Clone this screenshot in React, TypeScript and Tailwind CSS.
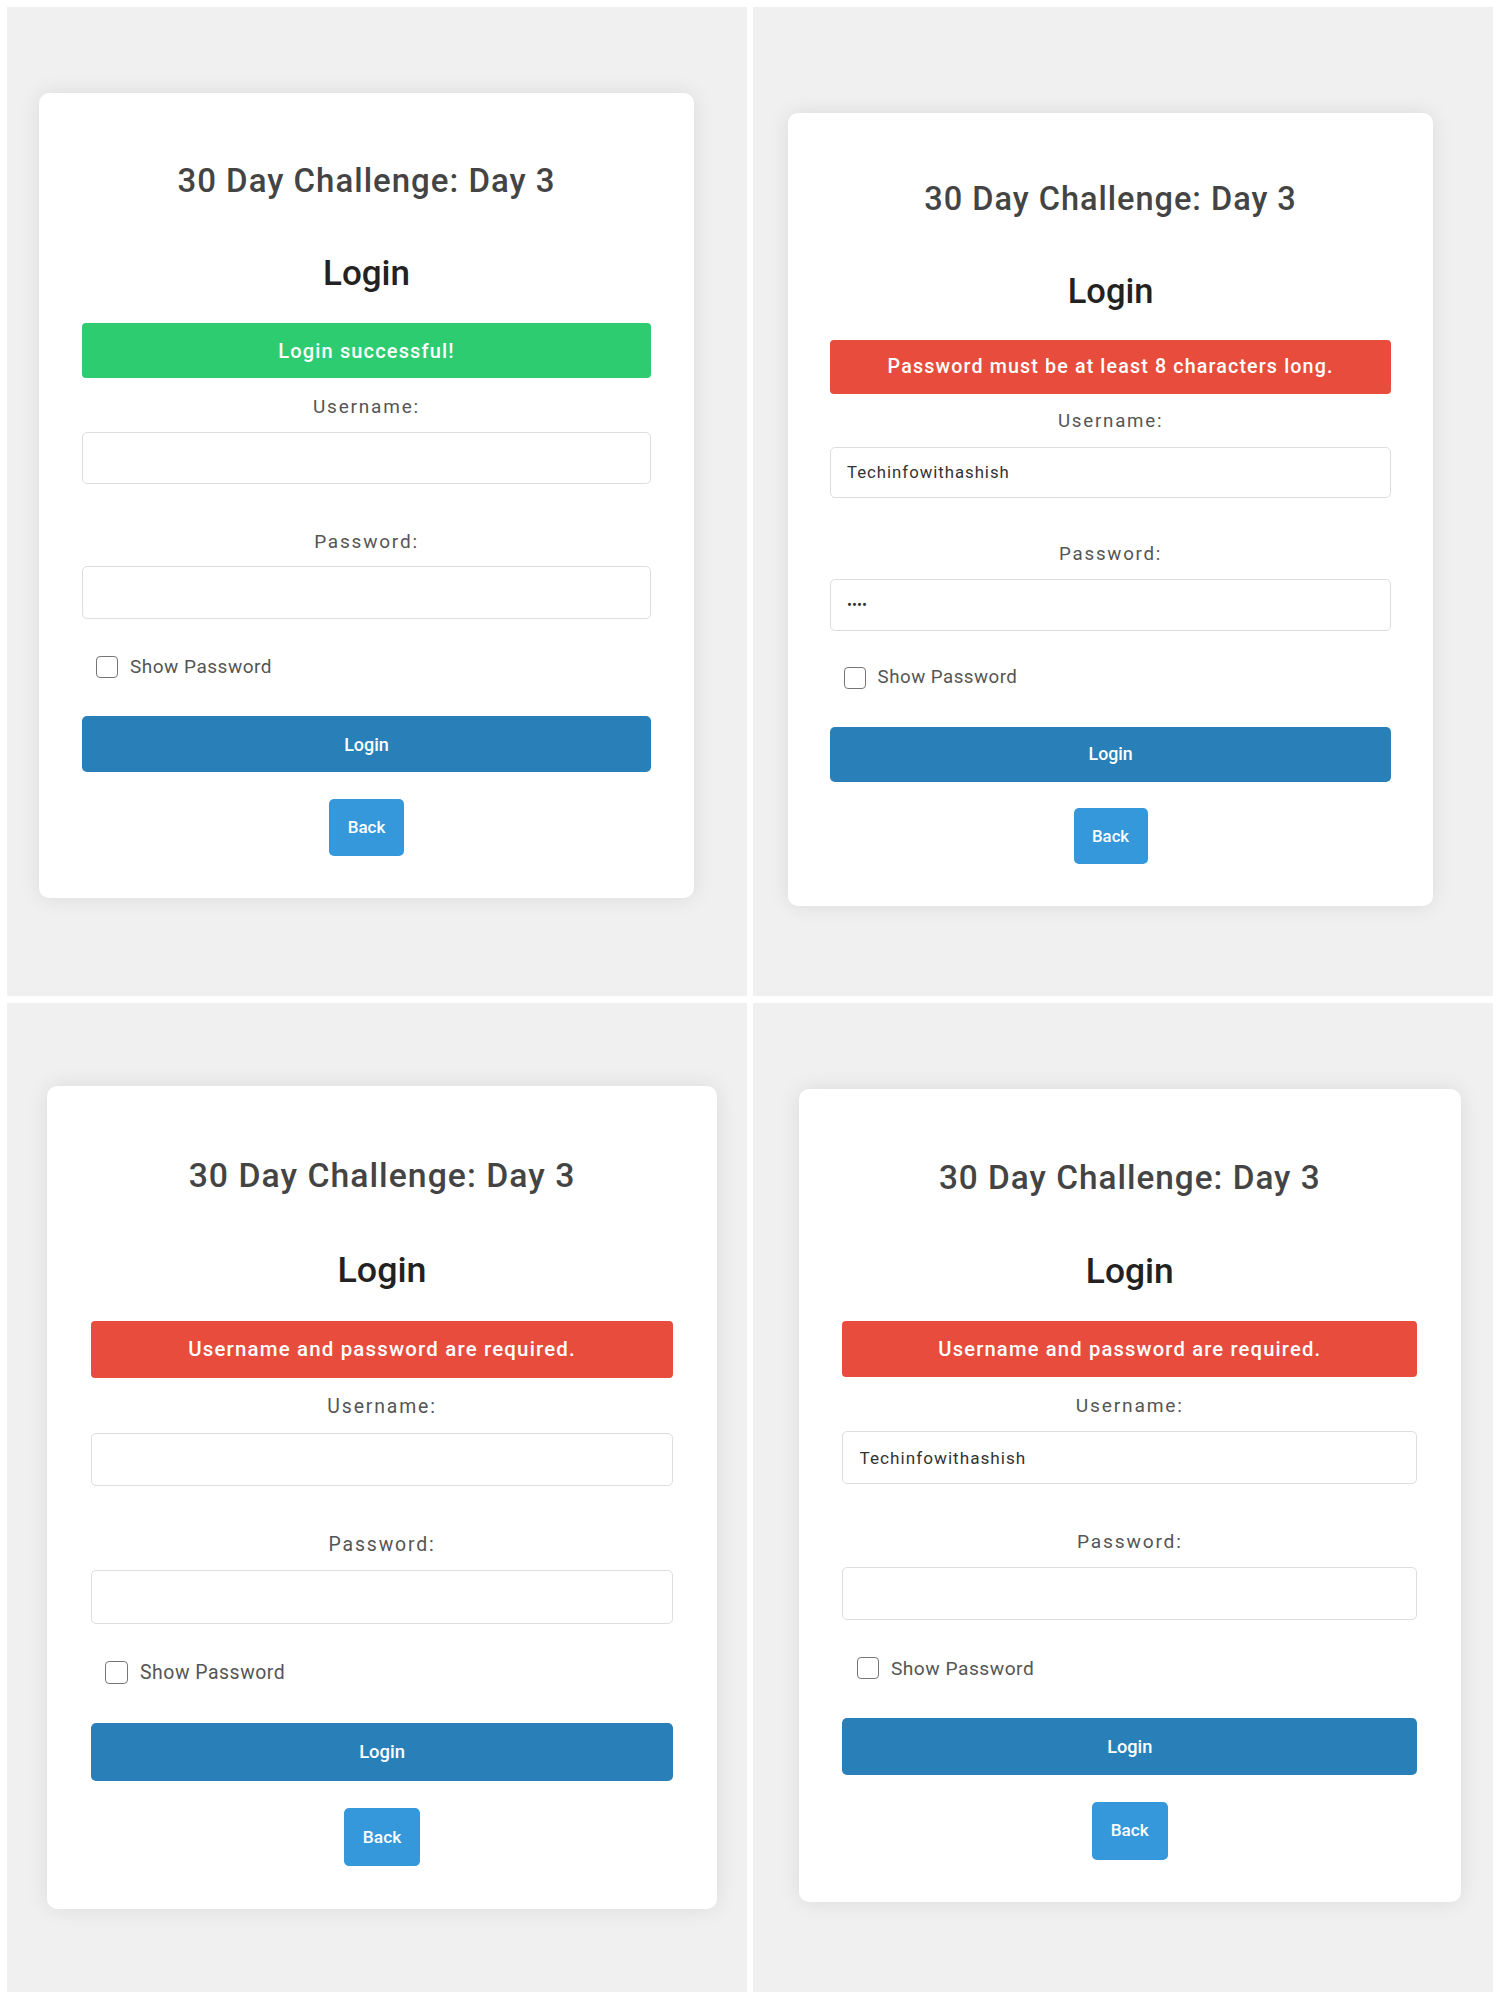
import React from "react";

type CardData = {
  zoomCls: string;
  padCls: string;
  msg: string;
  ok: boolean;
  user: string;
  pass: string;
};

const cards: CardData[] = [
  { zoomCls: "[zoom:1]", padCls: "pl-[32px] pt-[86px]", msg: "Login successful!", ok: true, user: "", pass: "" },
  { zoomCls: "[zoom:0.985]", padCls: "pl-[35px] pt-[106px]", msg: "Password must be at least 8 characters long.", ok: false, user: "Techinfowithashish", pass: "abcd" },
  { zoomCls: "[zoom:1.023]", padCls: "pl-[40px] pt-[83px]", msg: "Username and password are required.", ok: false, user: "", pass: "" },
  { zoomCls: "[zoom:1.01]", padCls: "pl-[46px] pt-[86px]", msg: "Username and password are required.", ok: false, user: "Techinfowithashish", pass: "" },
];

function Card({ c }: { c: CardData }) {
  return (
    <div className={`${c.zoomCls} w-[655px] bg-white rounded-[10px] shadow-[0_0_22px_rgba(0,0,0,0.09)] px-[43px] pt-[71px] pb-[42px] flex flex-col`}>
      <h1 className="text-[33px] leading-[33px] font-medium tracking-[1px] text-[#444] text-center">30 Day Challenge: Day 3</h1>
      <h2 className="mt-[59px] text-[35px] leading-[35px] font-medium text-[#222] text-center">Login</h2>
      <div className={`mt-[32px] h-[55px] rounded-[4px] flex items-center justify-center text-[20px] font-medium tracking-[1.15px] text-white ${c.ok ? "bg-[#2ecc71]" : "bg-[#e74c3c]"}`}>
        {c.msg}
      </div>
      <label className="mt-[20px] text-[19px] leading-[18px] tracking-[1.8px] text-[#555] text-center">Username:</label>
      <input
        readOnly
        value={c.user}
        className="mt-[16px] h-[52px] border border-[#dddddd] rounded-[5px] px-[16px] text-[17px] tracking-[1px] text-[#333] outline-none bg-white"
      />
      <label className="mt-[49px] text-[19px] leading-[18px] tracking-[1.8px] text-[#555] text-center">Password:</label>
      <input
        readOnly
        type="password"
        value={c.pass}
        className="mt-[15px] h-[53px] border border-[#dddddd] rounded-[5px] px-[16px] text-[15px] text-[#333] outline-none bg-white"
      />
      <div className="mt-[36px] h-[23px] flex items-center pl-[14px] gap-[12px]">
        <span className="w-[22px] h-[22px] border-[1.5px] border-[#767676] rounded-[4px] bg-white"></span>
        <span className="text-[19px] leading-[19px] tracking-[0.5px] text-[#555]">Show Password</span>
      </div>
      <button className="mt-[38px] h-[56px] bg-[#2980b9] rounded-[5px] text-white text-[18px] font-medium">Login</button>
      <button className="mt-[27px] self-center w-[75px] h-[57px] bg-[#3498db] rounded-[5px] text-white text-[17px] font-medium">Back</button>
    </div>
  );
}

export default function App() {
  return (
    <div className="w-[1500px] h-[1999px] bg-white p-[7px] grid grid-cols-[740px_740px] grid-rows-[989px_989px] gap-x-[6px] gap-y-[7px] font-['Roboto',sans-serif]">
      {cards.map((c, i) => (
        <div key={i} className={`bg-[#f0f0f0] overflow-hidden ${c.padCls}`}>
          <Card c={c} />
        </div>
      ))}
    </div>
  );
}
